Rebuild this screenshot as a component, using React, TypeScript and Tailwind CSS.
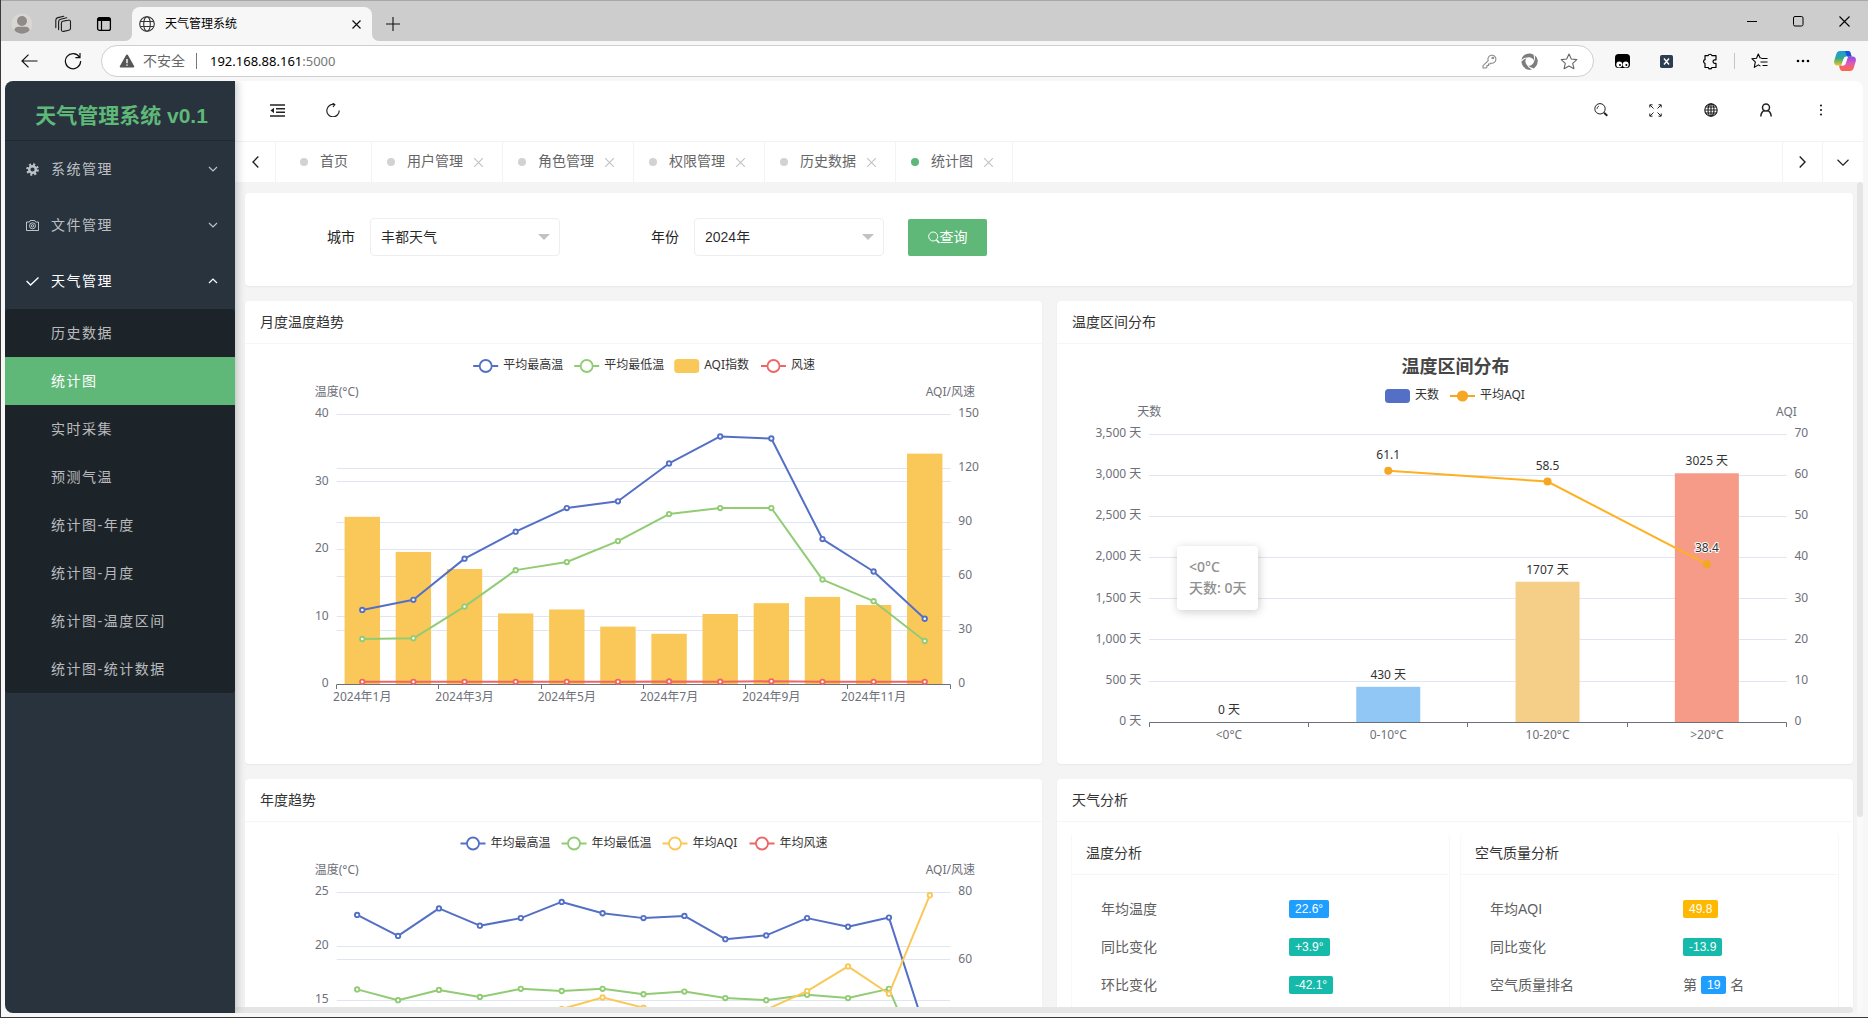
import type { ReactNode } from 'react';
import clsx from 'clsx';

const FONT_UI = "font-['Liberation_Sans','Noto_Sans_CJK_SC',sans-serif]";
const FONT_CHART = "font-['Noto_Sans','Noto_Sans_CJK_SC',sans-serif]";

const BLUE = '#5470c6';
const GREEN = '#91cc75';
const YELLOW = '#fac858';
const RED = '#ee6666';

/* ---------- Browser chrome ---------- */

function Cell({ className, children }: { className: string; children: ReactNode }) {
  return <div className={clsx('flex shrink-0 items-center justify-center', className)}>{children}</div>;
}

function TitleBar() {
  return (
    <div className="flex h-[41px] items-end border-t border-[#a8a8a8] bg-[#cdcdcd]">
      <Cell className="h-[34px] w-[41px]">
        <svg width="22" height="22" viewBox="0 0 22 22">
          <circle cx="11" cy="11" r="10.5" fill="#d9d7d4" />
          <circle cx="11" cy="8" r="5" fill="#8f8b88" />
          <path d="M3.5 17.5c0-3 2-3.8 4-3.8h7c2 0 4 .8 4 3.8a10.500 10.500 0 0 1-15 0z" fill="#8f8b88" />
        </svg>
      </Cell>
      <Cell className="h-[34px] w-[41px]">
        <svg width="18" height="18" viewBox="0 0 18 18" fill="none" stroke="#1b1b1b" strokeWidth="1.100" strokeLinecap="round">
          <path d="M8.700 6.200l5.600-1.100c1.300-.3 2.200.4 2.200 1.600v6.500c0 1.100-.6 1.800-1.700 2l-5.200 1.200c-1.200.3-2.200-.5-2.200-1.700V8.200c0-1.100.4-1.800 1.300-2z" />
          <path d="M4.600 14.600V6.900c0-1.500.7-2.400 2-2.700l6.200-1.400" />
          <path d="M1.800 12.600V5.300c0-1.500.8-2.400 2.100-2.700L9.800 1.200" />
        </svg>
      </Cell>
      <Cell className="h-[34px] w-[42px]">
        <svg width="16" height="16" viewBox="0 0 16 16" fill="none">
          <rect x="1.600" y="1.600" width="12.800" height="12.800" rx="2" stroke="#000" strokeWidth="1.300" />
          <path d="M1.500 5V3.500a2 2 0 0 1 2-2h9a2 2 0 0 1 2 2V5z" fill="#000" />
          <path d="M5.500 5v9.500" stroke="#000" strokeWidth="1.200" />
        </svg>
      </Cell>
      <svg className="shrink-0" width="7" height="7" viewBox="0 0 7 7">
        <path d="M7 0v7H0c4 0 7-3 7-7z" fill="#f7f7f7" />
      </svg>
      <div className="flex h-[34px] w-[240px] items-center rounded-t-lg bg-[#f7f7f7] pr-[10px] pl-[7px]">
        <svg width="16" height="16" viewBox="0 0 16 16" fill="none" stroke="#333" strokeWidth="1.100">
          <circle cx="8" cy="8" r="7.300" />
          <ellipse cx="8" cy="8" rx="3.300" ry="7.300" />
          <path d="M1.500 5.500h13M1.500 10.500h13" />
        </svg>
        <span className="ml-[10px] flex-1 text-xs leading-4 text-black">天气管理系统</span>
        <svg width="11" height="11" viewBox="0 0 11 11" stroke="#111" strokeWidth="1.200">
          <path d="M1.500 1.500l8 8M9.500 1.500l-8 8" />
        </svg>
      </div>
      <svg className="shrink-0" width="7" height="7" viewBox="0 0 7 7">
        <path d="M0 0v7h7C3 7 0 4 0 0z" fill="#f7f7f7" />
      </svg>
      <Cell className="h-[34px] w-[28px]">
        <svg width="14" height="14" viewBox="0 0 14 14" stroke="#111" strokeWidth="1.100">
          <path d="M7 0v14M0 7h14" />
        </svg>
      </Cell>
      <div className="flex-1" />
      <Cell className="h-10 w-[46px]">
        <svg width="10" height="10" viewBox="0 0 10 10" stroke="#000">
          <path d="M0 5.500h10" />
        </svg>
      </Cell>
      <Cell className="h-10 w-[46px]">
        <svg width="11" height="11" viewBox="0 0 11 11" fill="none" stroke="#000">
          <rect x=".5" y=".5" width="9.500" height="9.500" rx="1.500" />
        </svg>
      </Cell>
      <Cell className="h-10 w-[47px]">
        <svg width="11" height="11" viewBox="0 0 11 11" stroke="#000" strokeWidth="1.100">
          <path d="M.5.5l10 10M10.500.5l-10 10" />
        </svg>
      </Cell>
    </div>
  );
}

function AddressBar() {
  return (
    <div className="flex h-10 items-center bg-[#f7f7f7] pl-[6px]">
      <Cell className="w-11">
        <svg width="17" height="14" viewBox="0 0 17 14" fill="none" stroke="#111" strokeWidth="1.200">
          <path d="M16.500 7H1M7.500.6L1 7l6.500 6.400" />
        </svg>
      </Cell>
      <Cell className="w-11">
        <svg width="18" height="18" viewBox="0 0 18 18" fill="none" stroke="#111" strokeWidth="1.200">
          <path d="M15.500 5.200A7.600 7.600 0 1 0 16.600 9M16 1v4.600h-4.600" />
        </svg>
      </Cell>
      <div className="ml-[6px] flex h-8 flex-1 items-center rounded-full border border-[#cfcfcf] bg-white pr-1 pl-[17px]">
        <svg width="16" height="14" viewBox="0 0 16 14">
          <path d="M8 .5c.4 0 .7.200.9.600l6.300 11.200c.3.600-.1 1.200-.8 1.200H1.600c-.7 0-1.100-.6-.8-1.200L7.100 1.100C7.300.7 7.600.5 8 .5z" fill="#555" />
          <path d="M8 5v4.200M8 10.500v1.300" stroke="#fff" strokeWidth="1.400" />
        </svg>
        <span className="ml-[8px] text-sm leading-5 text-[#666]">不安全</span>
        <span className="ml-[11px] h-4 w-px bg-[#777]" />
        <span className={clsx(FONT_CHART, 'ml-[13px] flex-1 text-[13px] leading-5 text-black')}>
          192.168.88.161<span className="text-[#777]">:5000</span>
        </span>
        <Cell className="w-10">
          <svg width="15" height="15" viewBox="0 0 15 15" fill="none" stroke="#8a8a8a" strokeWidth="1.100">
            <path d="M6.200 6.700A4 4 0 1 1 9 9.100l-1 .9H6.500v1.500H5V13L4 14H1v-2.300z" />
            <circle cx="10.800" cy="4" r=".8" />
          </svg>
        </Cell>
        <Cell className="w-10">
          <svg width="17" height="17" viewBox="0 0 17 17" fill="none">
            <g fill="#7d7d7d">
              <path d="M1.300 4.700C3 1.500 6.700-.2 10.300.7c3.600.8 6 3.700 6.300 7.100-.7 1.800-2.300 2.600-4 2.200.8-2.200-.2-4.500-2.700-5.300C7.400 3.800 4 4.500 1.300 7.500z" />
              <path d="M1.300 4.700C3 1.500 6.700-.2 10.300.7c3.600.8 6 3.700 6.300 7.100-.7 1.800-2.300 2.600-4 2.200.8-2.200-.2-4.500-2.700-5.300C7.400 3.800 4 4.500 1.300 7.500z" transform="rotate(120 8.500 8.500)" />
              <path d="M1.300 4.700C3 1.500 6.700-.2 10.300.7c3.600.8 6 3.700 6.300 7.100-.7 1.800-2.300 2.600-4 2.200.8-2.200-.2-4.500-2.700-5.300C7.400 3.800 4 4.500 1.300 7.500z" transform="rotate(240 8.500 8.500)" />
            </g>
            <g stroke="#fff" strokeWidth="1.100">
              <path d="M.2 8.200C2.500 5.200 6 4.500 8.300 5.600" />
              <path d="M.2 8.200C2.500 5.200 6 4.500 8.300 5.600" transform="rotate(120 8.500 8.500)" />
              <path d="M.2 8.200C2.500 5.200 6 4.500 8.300 5.600" transform="rotate(240 8.500 8.500)" />
            </g>
          </svg>
        </Cell>
        <Cell className="w-10">
          <svg width="18" height="17" viewBox="0 0 18 17" fill="none" stroke="#666" strokeWidth="1.100" strokeLinejoin="round">
            <path d="M9 1l2.300 5 5.500.6-4.100 3.700 1.200 5.400L9 12.900l-4.900 2.800 1.200-5.400L1.200 6.600 6.700 6z" />
          </svg>
        </Cell>
      </div>
      <Cell className="ml-[6px] w-11">
        <svg width="15" height="15" viewBox="0 0 15 15">
          <rect width="15" height="14" rx="3.500" fill="#000" />
          <circle cx="4.300" cy="10.500" r="3" fill="#fff" />
          <circle cx="10.700" cy="10.500" r="3" fill="#fff" />
          <circle cx="5" cy="11" r="1" fill="#000" />
          <circle cx="11.400" cy="11" r="1" fill="#000" />
        </svg>
      </Cell>
      <Cell className="w-11">
        <svg width="13" height="13" viewBox="0 0 13 13">
          <rect width="13" height="13" rx="1.800" fill="#2c3e50" />
          <path d="M4 3.500l5 6M9 3.500l-5 6" stroke="#fff" strokeWidth="1.400" />
        </svg>
      </Cell>
      <Cell className="w-11">
        <svg width="16" height="17" viewBox="0 0 16 17" fill="none" stroke="#000" strokeWidth="1.200" strokeLinejoin="round">
          <path d="M3 2.700h3.200a1.900 1.900 0 0 1 3.700 0H14v4.100h-1.200a1.800 1.800 0 0 0 0 3.600H14v4.100H9.900a1.900 1.900 0 0 1-3.700 0H3v-4.100a1.900 1.900 0 0 1 0-3.700z" />
        </svg>
      </Cell>
      <span className="mx-[2px] h-4 w-px bg-[#c5c5c5]" />
      <Cell className="w-11">
        <svg width="17" height="16" viewBox="0 0 17 16" fill="none" stroke="#000" strokeWidth="1.100" strokeLinejoin="round">
          <path d="M10.500 5L9 4.800 7.300 1 5.500 5.200.8 5.700l3.500 3.200-1 5.500 4.100-2.500 2 1.200M10.500 5.500H16.500M9.500 9H16.500M11.500 12.500H16.500" />
        </svg>
      </Cell>
      <Cell className="w-11">
        <svg width="14" height="4" viewBox="0 0 14 4">
          <circle cx="2" cy="2" r="1.300" />
          <circle cx="7" cy="2" r="1.300" />
          <circle cx="12" cy="2" r="1.300" />
        </svg>
      </Cell>
      <Cell className="mr-[3px] w-10">
        <svg width="22" height="20" viewBox="0 0 22 20">
          <defs>
            <linearGradient id="copilotLeft" x1="0" y1="0" x2="0" y2="1">
              <stop offset="0" stopColor="#1c9be8" />
              <stop offset=".5" stopColor="#2fa98c" />
              <stop offset="1" stopColor="#f5c518" />
            </linearGradient>
            <linearGradient id="copilotRight" x1="0" y1="0" x2="0" y2="1">
              <stop offset="0" stopColor="#8a4bea" />
              <stop offset=".5" stopColor="#e25bb0" />
              <stop offset="1" stopColor="#ff6a3c" />
            </linearGradient>
          </defs>
          <path d="M6 0h8c2 0 2.500 1.500 3 3.500l.6 2H13c-2 0-2.600 1-3 2.500L8 14.500H3.500C.5 14.500-.4 12 .3 9.500l2-6.500C3 1 4 0 6 0z" fill="url(#copilotLeft)" />
          <path d="M16 20H8.500c-2 0-2.500-1.500-3-3.500l-.5-2h4c2 0 2.600-1 3-2.500l2-6.500h4.500c3 0 3.900 2.500 3.200 5l-2 6.500c-.6 2-1.700 3-3.700 3z" fill="url(#copilotRight)" />
          <path d="M13 5.500L14.200 5 9.800 14.500H7.200L9.500 8c.5-1.700 1.500-2.500 3.500-2.500z" fill="#fff" />
          <path d="M11 0h3c2 0 2.500 1.500 3 3.500l.6 2H13z" fill="#1b50d8" />
        </svg>
      </Cell>
    </div>
  );
}

/* ---------- Sidebar ---------- */

const SUB_ITEMS = ['历史数据', '统计图', '实时采集', '预测气温', '统计图-年度', '统计图-月度', '统计图-温度区间', '统计图-统计数据'];

interface NavItemProps {
  label: string;
  icon: ReactNode;
  open?: boolean;
}

function NavItem({ label, icon, open }: NavItemProps) {
  return (
    <div className={clsx('flex h-14 items-center pr-[17px] pl-5', open ? 'text-white' : 'text-white/70')}>
      <span className="flex w-[14px] justify-center">{icon}</span>
      <span className="ml-3 flex-1 text-sm tracking-[1.5px]">{label}</span>
      <svg width="10" height="6" viewBox="0 0 10 6" fill="none" stroke="currentColor" strokeWidth="1.200" className="shrink-0">
        <path d={open ? 'M1 5l4-4 4 4' : 'M1 1l4 4 4-4'} />
      </svg>
    </div>
  );
}

function Sidebar() {
  return (
    <aside className="z-10 w-[230px] shrink-0 bg-[#28333e] shadow-[2px_0_8px_rgba(29,35,41,0.25)]">
      <div className="flex h-[60px] items-center justify-center border-b border-[#212a33] pt-[10px] pl-[3px] text-[21px] leading-none font-bold text-[#5fb878]">
        天气管理系统 v0.1
      </div>
      <NavItem
        label="系统管理"
        icon={
          <svg width="13" height="13" viewBox="0 0 13 13" fill="none" stroke="currentColor">
            <circle cx="6.500" cy="6.500" r="3.300" strokeWidth="2.400" />
            <circle cx="6.500" cy="6.500" r="5.300" strokeWidth="2" strokeDasharray="2.100 2.060" />
          </svg>
        }
      />
      <NavItem
        label="文件管理"
        icon={
          <svg width="13" height="11" viewBox="0 0 13 11" fill="none" stroke="currentColor">
            <path d="M.5 2h3l.8-1.500h4.400L9.500 2h3v8.500H.5z" />
            <circle cx="6.500" cy="5.800" r="3" />
            <circle cx="6.500" cy="5.800" r="1.200" />
          </svg>
        }
      />
      <NavItem
        label="天气管理"
        open
        icon={
          <svg width="13" height="9" viewBox="0 0 13 9" fill="none" stroke="currentColor" strokeWidth="1.400">
            <path d="M.6 4l4 4L12.500.6" />
          </svg>
        }
      />
      <ul className="rounded-sm bg-[#1c2329]">
        {SUB_ITEMS.map((item) => (
          <li
            key={item}
            className={clsx(
              'flex h-12 items-center pl-[46px] text-sm tracking-[1.5px]',
              item === '统计图' ? 'bg-[#5fb878] text-white' : 'text-white/70',
            )}
          >
            {item}
          </li>
        ))}
      </ul>
    </aside>
  );
}

/* ---------- App header and page tabs ---------- */

function Header() {
  return (
    <header className="flex h-[60px] shrink-0 items-center px-[15px] pb-[2px] text-[#222]">
      <Cell className="w-[55px]">
        <svg width="15" height="13" viewBox="0 0 15 13" fill="none" stroke="currentColor" strokeWidth="1.500">
          <path d="M0 1h15M6 4.700h9M6 8.300h9M0 12h15" />
          <path d="M4 3.800v5.400L.5 6.500z" fill="currentColor" stroke="none" />
        </svg>
      </Cell>
      <Cell className="w-[55px]">
        <svg width="14" height="14" viewBox="0 0 14 14" fill="none" stroke="currentColor" strokeWidth="1.200">
          <path d="M13.200 7.500A6.200 6.200 0 1 1 8 1.500M6.500 0L8.800 1.700 7 4" />
        </svg>
      </Cell>
      <div className="flex-1" />
      <Cell className="w-[55px]">
        <svg width="14" height="14" viewBox="0 0 14 14" fill="none" stroke="currentColor">
          <circle cx="6" cy="5.800" r="5.200" />
          <path d="M3 6a3 3 0 0 1 2-3" strokeWidth=".8" />
          <path d="M10 9.800l3.300 3" strokeWidth="1.900" />
        </svg>
      </Cell>
      <Cell className="w-[55px]">
        <svg width="13" height="13" viewBox="0 0 13 13" fill="none" stroke="currentColor" strokeWidth="1">
          <path d="M.8 3.500V.8h2.700M9.500.8h2.700v2.700M12.200 9.500v2.700H9.500M3.500 12.200H.8V9.500M1 1l3.500 3.500M12 1L8.500 4.500M12 12L8.500 8.500M1 12l3.500-3.500" />
        </svg>
      </Cell>
      <Cell className="w-[55px]">
        <svg width="14" height="14" viewBox="0 0 14 14" fill="none" stroke="currentColor" strokeWidth="1.200">
          <circle cx="7" cy="7" r="6.200" />
          <ellipse cx="7" cy="7" rx="3" ry="6.200" />
          <path d="M7 1v12M1 7h12M1.800 4h10.400M1.800 10h10.400" />
        </svg>
      </Cell>
      <Cell className="w-[55px]">
        <svg width="12" height="14" viewBox="0 0 12 14" fill="none" stroke="currentColor" strokeWidth="1.500">
          <circle cx="6" cy="4.500" r="3.500" />
          <path d="M.8 13.500c.2-3 1.700-5.500 4-6M11.200 13.500c-.2-3-1.700-5.500-4-6" />
        </svg>
      </Cell>
      <Cell className="w-[55px]">
        <svg width="4" height="14" viewBox="0 0 4 14" fill="currentColor">
          <circle cx="2" cy="2.500" r="1.100" />
          <circle cx="2" cy="7" r="1.100" />
          <circle cx="2" cy="11.500" r="1.100" />
        </svg>
      </Cell>
    </header>
  );
}

const PAGE_TABS = ['首页', '用户管理', '角色管理', '权限管理', '历史数据', '统计图'];

function PageTabs() {
  return (
    <nav className="flex h-[41px] shrink-0 border-t border-[#f2f2f2] text-sm text-[#666]">
      <Cell className="w-[41px] border-r border-[#f3f3f3]">
        <svg width="7" height="12" viewBox="0 0 7 12" fill="none" stroke="#222" strokeWidth="1.400">
          <path d="M6.300.6L1 6l5.300 5.400" />
        </svg>
      </Cell>
      {PAGE_TABS.map((tab, i) => (
        <div
          key={tab}
          className={clsx('flex items-center border-r border-[#f3f3f3]', i === 0 ? 'w-[96px] pl-6' : 'pr-[19px] pl-[15px]')}
        >
          <span className={clsx('size-2 rounded-full', tab === '统计图' ? 'bg-[#5fb878]' : 'bg-[#d2d2d2]')} />
          <span className="ml-3 pb-[2px]">{tab}</span>
          {i > 0 && (
            <svg className="ml-[11px]" width="9" height="9" viewBox="0 0 9 9" stroke="#c2c2c2" strokeWidth="1.100">
              <path d="M0 0l9 9M9 0L0 9" />
            </svg>
          )}
        </div>
      ))}
      <div className="flex-1" />
      <Cell className="w-10 border-l border-[#f3f3f3]">
        <svg width="7" height="12" viewBox="0 0 7 12" fill="none" stroke="#222" strokeWidth="1.400">
          <path d="M.7.6L6 6 .7 11.400" />
        </svg>
      </Cell>
      <Cell className="w-[41px] border-l border-[#f3f3f3]">
        <svg width="12" height="7" viewBox="0 0 12 7" fill="none" stroke="#222" strokeWidth="1.200">
          <path d="M.5.8L6 6.200 11.500.8" />
        </svg>
      </Cell>
    </nav>
  );
}

/* ---------- Filter row ---------- */

function SelectBox({ value }: { value: string }) {
  return (
    <div className="flex h-[38px] w-[190px] items-center justify-between rounded-sm border border-[#eee] pr-[9px] pl-[10px]">
      <span className="text-black/85">{value}</span>
      <svg width="12" height="6" viewBox="0 0 12 6">
        <path d="M0 0h12L6 6z" fill="#c2c2c2" />
      </svg>
    </div>
  );
}

function Filters() {
  return (
    <div className="flex h-[93px] shrink-0 items-start rounded-sm bg-white pt-[25px] pl-[82px] text-sm text-[#222] shadow-[0_1px_2px_rgba(0,0,0,0.05)]">
      <div className="flex items-center">
        <span className="w-[43px]">城市</span>
        <SelectBox value="丰都天气" />
        <span className="ml-[91px] w-[43px]">年份</span>
        <SelectBox value="2024年" />
        <button className="ml-6 flex h-[37px] w-[79px] items-center justify-center rounded-xs bg-[#5fb878] text-white">
          <svg width="12" height="13" viewBox="0 0 12 13" fill="none" stroke="currentColor">
            <circle cx="5.200" cy="5.500" r="4.500" />
            <path d="M8.500 9l2.800 3" strokeWidth="1.600" />
          </svg>
          <span>查询</span>
        </button>
      </div>
    </div>
  );
}

/* ---------- Charts ---------- */

interface Axis {
  max: number;
  ticks: number[];
  format?: (v: number) => string;
}

interface Plot {
  left: number;
  right: number;
  top: number;
  bottom: number;
}

interface LegendEntry {
  x: number;
  label: string;
  color: string;
  kind: 'line' | 'dot' | 'bar';
}

const yOf = (plot: Plot, value: number, max: number) => plot.bottom - (value / max) * (plot.bottom - plot.top);
const xOf = (plot: Plot, i: number, count: number) => plot.left + ((i + 0.5) * (plot.right - plot.left)) / count;
const crisp = (v: number) => Math.floor(v) + 0.5;

function Legend({ items, y }: { items: LegendEntry[]; y: number }) {
  return (
    <g>
      {items.map((it) => (
        <g key={it.label}>
          {it.kind === 'bar' ? (
            <rect x={it.x} y={y - 7} width="25" height="14" rx="3.500" fill={it.color} />
          ) : (
            <>
              <path d={`M${it.x} ${y}h25`} stroke={it.color} strokeWidth="2" />
              <circle
                cx={it.x + 12.5}
                cy={y}
                r={it.kind === 'dot' ? 5.6 : 6}
                fill={it.kind === 'dot' ? it.color : '#fff'}
                stroke={it.kind === 'dot' ? 'none' : it.color}
                strokeWidth="1.800"
              />
            </>
          )}
          <text x={it.x + 30} y={y + 3} fill="#333">
            {it.label}
          </text>
        </g>
      ))}
    </g>
  );
}

function Grid({ plot, left, right }: { plot: Plot; left: Axis; right: Axis }) {
  return (
    <g>
      {[left, right].map((axis, side) =>
        axis.ticks.map((t) => {
          const y = yOf(plot, t, axis.max);
          return (
            <g key={`${side}-${t}`}>
              {t > 0 && <path d={`M${plot.left} ${crisp(y)}H${plot.right}`} stroke="#e0e6f1" />}
              <text
                x={side === 0 ? plot.left - 8 : plot.right + 8}
                y={y + 2.8}
                textAnchor={side === 0 ? 'end' : 'start'}
                fill="#6e7079"
              >
                {axis.format ? axis.format(t) : t}
              </text>
            </g>
          );
        }),
      )}
    </g>
  );
}

interface SeriesLineProps {
  plot: Plot;
  data: number[];
  max: number;
  color: string;
}

function SeriesLine({ plot, data, max, color }: SeriesLineProps) {
  const points = data.map((v, i) => [xOf(plot, i, data.length), yOf(plot, v, max)]);
  return (
    <g>
      <polyline points={points.map((p) => p.join(',')).join(' ')} fill="none" stroke={color} strokeWidth="2" strokeLinejoin="bevel" />
      {points.map(([x, y], i) => (
        <circle key={i} cx={x} cy={y} r="2.200" fill="#fff" stroke={color} strokeWidth="1.900" />
      ))}
    </g>
  );
}

function AxisLine({ plot, ticks }: { plot: Plot; ticks: number }) {
  const step = (plot.right - plot.left) / ticks;
  return (
    <g stroke="#6e7079">
      <path d={`M${plot.left} ${crisp(plot.bottom)}H${plot.right}`} />
      {Array.from({ length: ticks + 1 }, (_, i) => (
        <path key={i} d={`M${crisp(plot.left + i * step - 0.2)} ${crisp(plot.bottom)}v4.500`} />
      ))}
    </g>
  );
}

const TREND_PLOT: Plot = { left: 91.7, right: 705.3, top: 70.2, bottom: 340.2 };

const MONTHLY = {
  high: [11, 12.5, 18.6, 22.6, 26.1, 27.1, 32.7, 36.7, 36.4, 21.5, 16.7, 9.7],
  low: [6.7, 6.8, 11.5, 16.9, 18.1, 21.2, 25.2, 26.1, 26.1, 15.5, 12.3, 6.4],
  aqi: [93, 73.5, 64, 39.3, 41.5, 32, 28, 39, 45, 48.5, 44, 128.1],
  wind: [1.3, 1.3, 1.3, 1.3, 1.3, 1.3, 1.5, 1.4, 1.6, 1.3, 1.3, 1.3],
};

function MonthlyChart() {
  const plot = TREND_PLOT;
  return (
    <svg width="797" height="420" className={clsx(FONT_CHART, 'block text-xs')}>
      <Legend
        y={22}
        items={[
          { x: 228.2, label: '平均最高温', color: BLUE, kind: 'line' },
          { x: 329.2, label: '平均最低温', color: GREEN, kind: 'line' },
          { x: 429.2, label: 'AQI指数', color: YELLOW, kind: 'bar' },
          { x: 516, label: '风速', color: RED, kind: 'line' },
        ]}
      />
      <text x={plot.left} y="52" textAnchor="middle" fill="#6e7079">温度(°C)</text>
      <text x={plot.right} y="52" textAnchor="middle" fill="#6e7079">AQI/风速</text>
      <Grid plot={plot} left={{ max: 40, ticks: [0, 10, 20, 30, 40] }} right={{ max: 150, ticks: [0, 30, 60, 90, 120, 150] }} />
      {MONTHLY.aqi.map((v, i) => {
        const y = yOf(plot, v, 150);
        return <rect key={i} x={xOf(plot, i, 12) - 17.7} y={y} width="35.400" height={plot.bottom - y} fill={YELLOW} />;
      })}
      <AxisLine plot={plot} ticks={6} />
      {[1, 3, 5, 7, 9, 11].map((m) => (
        <text key={m} x={xOf(plot, m - 1, 12)} y="357" textAnchor="middle" fill="#6e7079">
          {`2024年${m}月`}
        </text>
      ))}
      <SeriesLine plot={plot} data={MONTHLY.high} max={40} color={BLUE} />
      <SeriesLine plot={plot} data={MONTHLY.low} max={40} color={GREEN} />
      <SeriesLine plot={plot} data={MONTHLY.wind} max={150} color={RED} />
    </svg>
  );
}

const YEARLY = {
  high: [22.9, 20.95, 23.5, 21.9, 22.6, 24.1, 23.05, 22.6, 22.8, 20.65, 21, 22.6, 21.8, 22.65, 10.9],
  low: [16, 15, 15.95, 15.3, 16.05, 15.85, 16.05, 15.55, 15.8, 15.2, 15, 15.5, 15.2, 16.05, 7.2],
  aqi: [40, 38, 41, 39, 41, 45.4, 48.8, 45.8, 39, 40, 45.2, 50.7, 58, 49.9, 79.1],
};

function YearlyChart() {
  const plot = TREND_PLOT;
  return (
    <svg width="797" height="420" className={clsx(FONT_CHART, 'block text-xs')}>
      <Legend
        y={21.5}
        items={[
          { x: 215.5, label: '年均最高温', color: BLUE, kind: 'line' },
          { x: 316.5, label: '年均最低温', color: GREEN, kind: 'line' },
          { x: 417.5, label: '年均AQI', color: YELLOW, kind: 'line' },
          { x: 504.5, label: '年均风速', color: RED, kind: 'line' },
        ]}
      />
      <text x={plot.left} y="52" textAnchor="middle" fill="#6e7079">温度(°C)</text>
      <text x={plot.right} y="52" textAnchor="middle" fill="#6e7079">AQI/风速</text>
      <Grid plot={plot} left={{ max: 25, ticks: [15, 20, 25] }} right={{ max: 80, ticks: [60, 80] }} />
      <SeriesLine plot={plot} data={YEARLY.high} max={25} color={BLUE} />
      <SeriesLine plot={plot} data={YEARLY.low} max={25} color={GREEN} />
      <SeriesLine plot={plot} data={YEARLY.aqi} max={80} color={YELLOW} />
    </svg>
  );
}

const RANGES = [
  { label: '<0°C', days: 0, color: '#91c7f5' },
  { label: '0-10°C', days: 430, aqi: 61.1, color: '#91c7f5' },
  { label: '10-20°C', days: 1707, aqi: 58.5, color: '#f5ce88' },
  { label: '>20°C', days: 3025, aqi: 38.4, color: '#f59b88' },
];

function RangeChart() {
  const plot: Plot = { left: 92.3, right: 729.5, top: 90.2, bottom: 378.2 };
  const points = RANGES.flatMap((r, i) => (r.aqi ? [{ x: xOf(plot, i, 4), y: yOf(plot, r.aqi, 70), v: r.aqi }] : []));
  return (
    <svg width="796" height="420" className={clsx(FONT_CHART, 'block text-xs')}>
      <text x="398.500" y="29.200" textAnchor="middle" fill="#464646" className="text-[18px] font-bold">
        温度区间分布
      </text>
      <Legend
        y={52}
        items={[
          { x: 328, label: '天数', color: BLUE, kind: 'bar' },
          { x: 393, label: '平均AQI', color: '#f5a623', kind: 'dot' },
        ]}
      />
      <text x={plot.left} y="72" textAnchor="middle" fill="#6e7079">天数</text>
      <text x={plot.right} y="72" textAnchor="middle" fill="#6e7079">AQI</text>
      <Grid
        plot={plot}
        left={{
          max: 3500,
          ticks: [0, 500, 1000, 1500, 2000, 2500, 3000, 3500],
          format: (v) => `${v.toLocaleString('en-US')} 天`,
        }}
        right={{ max: 70, ticks: [0, 10, 20, 30, 40, 50, 60, 70] }}
      />
      {RANGES.map((r, i) => {
        const x = xOf(plot, i, 4);
        const y = yOf(plot, r.days, 3500);
        return (
          <g key={r.label}>
            <rect x={x - 32} y={y} width="64" height={plot.bottom - y} fill={r.color} />
            <text x={x} y={y - 8} textAnchor="middle" fill="#333" stroke="#fff" strokeWidth="2" paintOrder="stroke">
              {`${r.days} 天`}
            </text>
            <text x={x} y="395" textAnchor="middle" fill="#6e7079">
              {r.label}
            </text>
          </g>
        );
      })}
      <AxisLine plot={plot} ticks={4} />
      <polyline points={points.map((p) => `${p.x},${p.y}`).join(' ')} fill="none" stroke="#ffb020" strokeWidth="2" />
      {points.map((p) => (
        <g key={p.v}>
          <circle cx={p.x} cy={p.y} r="4" fill="#f5a623" />
          <text x={p.x} y={p.y - 11.8} textAnchor="middle" fill="#333" stroke="#fff" strokeWidth="2" paintOrder="stroke">
            {p.v}
          </text>
        </g>
      ))}
    </svg>
  );
}

/* ---------- Cards ---------- */

function Card({ title, children }: { title: string; children: ReactNode }) {
  return (
    <section className="h-[463px] overflow-hidden rounded-sm bg-white shadow-[0_1px_2px_rgba(0,0,0,0.05)]">
      <h3 className="flex h-[43px] items-center border-b border-[#f6f6f6] pb-px pl-[15px] text-sm text-[#333]">{title}</h3>
      {children}
    </section>
  );
}

function Badge({ color, children }: { color: 'blue' | 'teal' | 'orange'; children: ReactNode }) {
  const colors = { blue: 'bg-[#1e9fff]', teal: 'bg-[#16baaa]', orange: 'bg-[#ffb800]' };
  return (
    <span className={clsx('inline-block h-[18px] rounded-xs px-[6px] text-xs leading-[18px] text-white', colors[color])}>
      {children}
    </span>
  );
}

interface StatPanelProps {
  title: string;
  labelWidth: string;
  rows: { label: string; value: ReactNode }[];
}

function StatPanel({ title, labelWidth, rows }: StatPanelProps) {
  return (
    <div className="flex-1 rounded-sm border border-t-0 border-[#f8f8f8] pb-6">
      <h4 className="flex h-[42px] items-center border-b border-[#f6f6f6] pb-[2px] pl-[14px] text-sm text-[#333]">{title}</h4>
      <div className="pt-[15px] pl-[29px] text-sm text-[#5f5f5f]">
        {rows.map((row) => (
          <div key={row.label} className="flex h-[38px] items-center">
            <span className={labelWidth}>{row.label}</span>
            <span className="flex items-center gap-1">{row.value}</span>
          </div>
        ))}
      </div>
    </div>
  );
}

function Analysis() {
  return (
    <div className="flex gap-[10px] px-[14px] pt-[11px]">
      <StatPanel
        title="温度分析"
        labelWidth="w-[188px]"
        rows={[
          { label: '年均温度', value: <Badge color="blue">22.6°</Badge> },
          { label: '同比变化', value: <Badge color="teal">+3.9°</Badge> },
          { label: '环比变化', value: <Badge color="teal">-42.1°</Badge> },
        ]}
      />
      <StatPanel
        title="空气质量分析"
        labelWidth="w-[193px]"
        rows={[
          { label: '年均AQI', value: <Badge color="orange">49.8</Badge> },
          { label: '同比变化', value: <Badge color="teal">-13.9</Badge> },
          {
            label: '空气质量排名',
            value: (
              <>
                第 <Badge color="blue">19</Badge> 名
              </>
            ),
          },
        ]}
      />
    </div>
  );
}

function ChartTooltip() {
  return (
    <div
      className={clsx(
        FONT_CHART,
        'absolute top-[245px] left-[120px] h-[64px] w-[81px] rounded bg-white pt-[10px] pl-[12px] text-sm leading-[21px] font-medium text-[#909090] shadow-[1px_2px_10px_rgba(0,0,0,0.2)]',
      )}
    >
      <div>&lt;0°C</div>
      <div className="whitespace-nowrap">天数: 0天</div>
    </div>
  );
}

export default function App() {
  return (
    <div className={clsx(FONT_UI, 'flex h-[1018px] w-[1868px] flex-col overflow-hidden border-b border-l border-[#3a3a3a] bg-[#f7f7f7]')}>
      <TitleBar />
      <AddressBar />
      <div className="mr-[5px] mb-1 ml-1 flex min-h-0 flex-1 overflow-hidden rounded-lg bg-white">
        <Sidebar />
        <div className="flex min-w-0 flex-1 flex-col">
          <Header />
          <PageTabs />
          <div className="flex min-h-0 flex-1 bg-[#f4f4f4]">
            <div className="flex min-w-0 flex-1 flex-col">
              <main className="min-h-0 flex-1 overflow-hidden pt-[11px] pr-1 pl-[10px]">
                <Filters />
                <div className="mt-[15px] grid grid-cols-[797px_796px] gap-[15px]">
                  <Card title="月度温度趋势">
                    <MonthlyChart />
                  </Card>
                  <div className="relative">
                    <Card title="温度区间分布">
                      <RangeChart />
                    </Card>
                    <ChartTooltip />
                  </div>
                  <Card title="年度趋势">
                    <YearlyChart />
                  </Card>
                  <Card title="天气分析">
                    <Analysis />
                  </Card>
                </div>
              </main>
              <div className="mr-1 h-[6px] shrink-0 rounded-r-sm bg-[#e5e5e5]" />
            </div>
            <div className="w-[6px] shrink-0 bg-[#fafafa]">
              <div className="h-[635px] rounded-sm bg-[#e5e5e5]" />
            </div>
          </div>
        </div>
      </div>
    </div>
  );
}
